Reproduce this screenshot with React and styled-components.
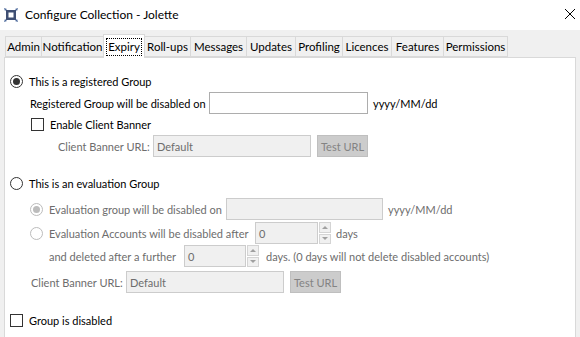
import React from 'react';
import styled, { createGlobalStyle } from 'styled-components';

const GlobalStyle = createGlobalStyle`
  html, body {
    margin: 0;
    padding: 0;
    background: #f0f0f0;
  }
  body {
    font-family: Lato, "Noto Sans", sans-serif;
    font-size: 11px;
    color: #000;
  }
`;

const tabs = [
  { label: 'Admin', width: 37 },
  { label: 'Notification', width: 63 },
  { label: 'Expiry', width: 42, active: true },
  { label: 'Roll-ups', width: 47 },
  { label: 'Messages', width: 57 },
  { label: 'Updates', width: 50 },
  { label: 'Profiling', width: 48 },
  { label: 'Licences', width: 50 },
  { label: 'Features', width: 53 },
  { label: 'Permissions', width: 65 },
];

const Window = styled.div`
  width: 580px;
  height: 337px;
  overflow: hidden;
  display: flex;
  flex-direction: column;
  background: #f0f0f0;
`;

const TitleBar = styled.div`
  height: 30px;
  background: #fff;
  display: flex;
  align-items: center;
  padding: 0 4px 0 3px;
  flex-shrink: 0;
`;

const TitleText = styled.div`
  flex: 1;
  margin-left: 6px;
  font-size: 12px;
  line-height: 16px;
`;

const CloseButton = styled.div`
  width: 12px;
  height: 12px;
  margin-top: -2px;
  display: flex;
  align-items: center;
  justify-content: center;
`;

const Body = styled.div`
  flex: 1;
  padding: 3px 4px 0 4px;
  display: flex;
  flex-direction: column;
`;

const TabStrip = styled.div`
  display: flex;
  align-items: flex-end;
  height: 24px;
  padding-left: 1px;
  position: relative;
  z-index: 1;
`;

const Tab = styled.div`
  box-sizing: border-box;
  width: ${(p) => p.$width}px;
  height: ${(p) => (p.$active ? 24 : 21)}px;
  margin-bottom: ${(p) => (p.$active ? -1 : 0)}px;
  margin-left: -1px;
  background: ${(p) => (p.$active ? '#fff' : '#f0f0f0')};
  border: 1px solid #d9d9d9;
  border-bottom: ${(p) => (p.$active ? 'none' : '1px solid #d9d9d9')};
  display: flex;
  align-items: ${(p) => (p.$active ? 'flex-start' : 'center')};
  justify-content: center;
  padding-top: ${(p) => (p.$active ? 4 : 0)}px;
  font-size: 11.5px;
  white-space: nowrap;
  &:first-child {
    margin-left: 0;
  }
`;

const FocusLabel = styled.span`
  outline: 1px dotted #000;
  outline-offset: 0;
  padding: 0 1px;
  line-height: 16px;
`;

const Panel = styled.div`
  flex: 1;
  background: #fff;
  border: 1px solid #d9d9d9;
  border-bottom: none;
  padding-top: 13px;
  display: flex;
  flex-direction: column;
`;

const Row = styled.div`
  display: flex;
  align-items: center;
  height: ${(p) => p.$h || 22}px;
  margin-top: ${(p) => p.$mt || 0}px;
  padding-left: ${(p) => p.$indent}px;
  white-space: nowrap;
  color: ${(p) => (p.$disabled ? '#6d6d6d' : '#000')};
`;

const Label = styled.span`
  ${(p) => (p.$w ? `width: ${p.$w}px; flex-shrink: 0;` : '')}
`;

const RadioCircle = styled.span`
  box-sizing: border-box;
  width: 13px;
  height: 13px;
  border-radius: 50%;
  border: 1px solid ${(p) => (p.$disabled ? '#bcbcbc' : '#333')};
  background: #fff;
  display: inline-flex;
  align-items: center;
  justify-content: center;
  margin-right: 6px;
  flex-shrink: 0;
  &::after {
    content: '';
    display: ${(p) => (p.$checked ? 'block' : 'none')};
    width: 7px;
    height: 7px;
    border-radius: 50%;
    background: ${(p) => (p.$disabled ? '#bcbcbc' : '#333')};
  }
`;

const CheckBox = styled.span`
  box-sizing: border-box;
  width: 13px;
  height: 13px;
  border: 1px solid #333;
  background: #fff;
  margin-right: 6px;
  flex-shrink: 0;
`;

const TextInput = styled.div`
  box-sizing: border-box;
  width: ${(p) => p.$w}px;
  height: 22px;
  border: 1px solid ${(p) => (p.$disabled ? '#cccccc' : '#adadad')};
  background: ${(p) => (p.$disabled ? '#f0f0f0' : '#fff')};
  color: #6d6d6d;
  padding-left: 3px;
  display: flex;
  align-items: center;
  flex-shrink: 0;
`;

const SpinButtons = styled.div`
  box-sizing: border-box;
  width: 12px;
  height: 22px;
  margin-left: 1px;
  display: flex;
  flex-direction: column;
  gap: 1px;
`;

const SpinHalf = styled.div`
  flex: 1;
  border: 1px solid #d4d4d4;
  background: #f0f0f0;
  display: flex;
  align-items: center;
  justify-content: center;
`;

const Arrow = styled.span`
  width: 0;
  height: 0;
  border-left: 3px solid transparent;
  border-right: 3px solid transparent;
  ${(p) =>
    p.$up ? 'border-bottom: 3px solid #a0a0a0;' : 'border-top: 3px solid #a0a0a0;'}
`;

const TestButton = styled.div`
  box-sizing: border-box;
  width: 51px;
  height: 22px;
  margin-left: 6px;
  background: #cccccc;
  border: 1px solid #bfbfbf;
  color: #838383;
  display: flex;
  align-items: center;
  justify-content: center;
`;

const Unit = styled.span`
  margin-left: ${(p) => p.$ml || 5}px;
`;

const AppIcon = () => (
  <svg width="16" height="16" viewBox="0 0 16 16">
    <rect x="3" y="3" width="10" height="10" fill="#3f4f73" />
    <rect x="5.5" y="5.5" width="5" height="5" fill="#fff" />
    <path d="M1 1 L4 2 L2 4 Z M15 1 L12 2 L14 4 Z M1 15 L4 14 L2 12 Z M15 15 L12 14 L14 12 Z" fill="#4d6a9c" />
  </svg>
);

const CloseIcon = () => (
  <svg width="12" height="12" viewBox="0 0 12 12">
    <path d="M1 1 L11 11 M11 1 L1 11" stroke="#000" strokeWidth="1" />
  </svg>
);

const Spin = ({ w }) => (
  <>
    <TextInput $w={w} $disabled>0</TextInput>
    <SpinButtons>
      <SpinHalf><Arrow $up /></SpinHalf>
      <SpinHalf><Arrow /></SpinHalf>
    </SpinButtons>
  </>
);

export default function App() {
  return (
    <Window>
      <GlobalStyle />
      <TitleBar>
        <AppIcon />
        <TitleText>Configure Collection - Jolette</TitleText>
        <CloseButton><CloseIcon /></CloseButton>
      </TitleBar>
      <Body>
        <TabStrip>
          {tabs.map((t) => (
            <Tab key={t.label} $width={t.width} $active={t.active}>
              {t.active ? <FocusLabel>{t.label}</FocusLabel> : t.label}
            </Tab>
          ))}
        </TabStrip>
        <Panel>
          <Row $h={20} $indent={5}>
            <RadioCircle $checked />
            <Label>This is a registered Group</Label>
          </Row>
          <Row $mt={1} $indent={25}>
            <Label $w={179}>Registered Group will be disabled on</Label>
            <TextInput $w={159} />
            <Unit>yyyy/MM/dd</Unit>
          </Row>
          <Row $h={20} $indent={26}>
            <CheckBox />
            <Label>Enable Client Banner</Label>
          </Row>
          <Row $mt={1} $indent={53} $disabled>
            <Label $w={95}>Client Banner URL:</Label>
            <TextInput $w={158} $disabled>Default</TextInput>
            <TestButton>Test URL</TestButton>
          </Row>
          <Row $h={20} $mt={16} $indent={5}>
            <RadioCircle />
            <Label>This is an evaluation Group</Label>
          </Row>
          <Row $mt={5} $indent={25} $disabled>
            <RadioCircle $checked $disabled />
            <Label $w={177}>Evaluation group will be disabled on</Label>
            <TextInput $w={157} $disabled />
            <Unit>yyyy/MM/dd</Unit>
          </Row>
          <Row $mt={2} $indent={25} $disabled>
            <RadioCircle $disabled />
            <Label $w={206}>Evaluation Accounts will be disabled after</Label>
            <Spin w={63} />
            <Unit>days</Unit>
          </Row>
          <Row $mt={1} $indent={44} $disabled>
            <Label $w={135}>and deleted after a further</Label>
            <Spin w={62} />
            <Unit $ml={7}>days. (0 days will not delete disabled accounts)</Unit>
          </Row>
          <Row $mt={4} $indent={26} $disabled>
            <Label $w={95}>Client Banner URL:</Label>
            <TextInput $w={158} $disabled>Default</TextInput>
            <TestButton>Test URL</TestButton>
          </Row>
          <Row $h={20} $mt={17} $indent={5}>
            <CheckBox />
            <Label>Group is disabled</Label>
          </Row>
        </Panel>
      </Body>
    </Window>
  );
}
